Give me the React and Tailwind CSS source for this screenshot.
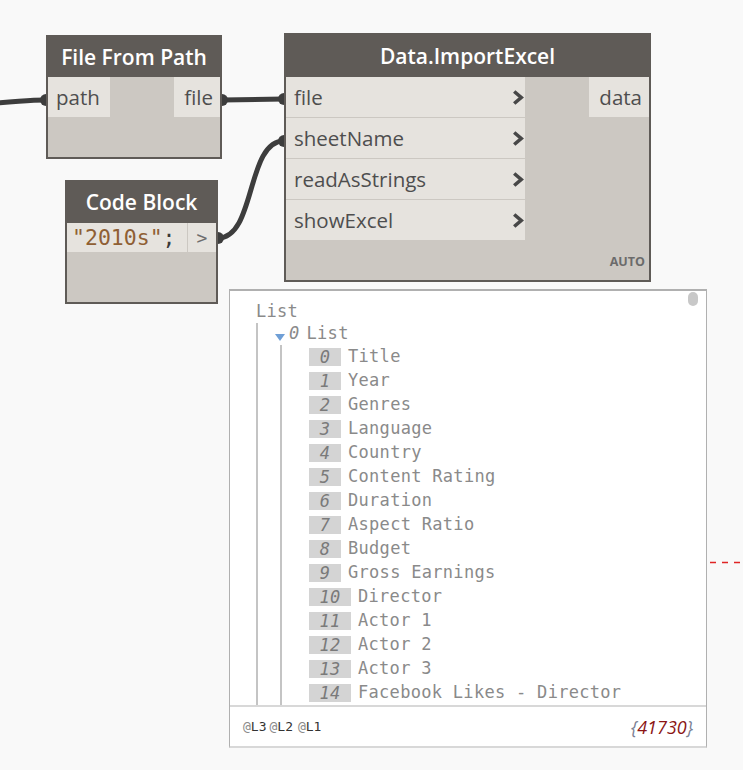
import React from "react";

const items = [
  "Title",
  "Year",
  "Genres",
  "Language",
  "Country",
  "Content Rating",
  "Duration",
  "Aspect Ratio",
  "Budget",
  "Gross Earnings",
  "Director",
  "Actor 1",
  "Actor 2",
  "Actor 3",
  "Facebook Likes - Director",
];

const sans = { fontFamily: '"Open Sans", "Noto Sans", sans-serif' };
const mono = { fontFamily: '"DejaVu Sans Mono", "Liberation Mono", monospace' };

function Chevron() {
  return (
    <svg width="12" height="15" viewBox="0 0 12 15">
      <path d="M2.2 1.5 L9.2 7.5 L2.2 13.5" fill="none" stroke="#474747" strokeWidth="3.6" />
    </svg>
  );
}

function Header({ children }) {
  return (
    <div className="h-[40px] bg-[#5f5b57] flex items-center justify-center text-white text-[21px] font-semibold leading-none">
      {children}
    </div>
  );
}

export default function App() {
  return (
    <div
      className="relative w-[743px] h-[770px] bg-[#f9f9f9] overflow-hidden text-[#4e4e4e]"
      style={sans}
    >
      {/* wires */}
      <svg className="absolute inset-0 pointer-events-none" width="743" height="770">
        <g fill="none" stroke="#3d3d3d" strokeWidth="5" strokeLinecap="round">
          <path d="M-10 103 C 15 102.5, 25 100, 46 100" />
          <path d="M222 100 L 284 99" />
          <path d="M218 238 C 256 238, 246 141, 284 141" />
        </g>
        <g fill="#3d3d3d">
          <circle cx="46" cy="100" r="6" />
          <circle cx="222" cy="100" r="6" />
          <circle cx="284" cy="99" r="6" />
          <circle cx="284" cy="141" r="6" />
          <circle cx="218" cy="238" r="6" />
        </g>
        <line
          x1="710"
          y1="562.5"
          x2="743"
          y2="562.5"
          stroke="#e02424"
          strokeWidth="1.5"
          strokeDasharray="6 6"
        />
      </svg>

      {/* File From Path */}
      <div className="absolute left-[46px] top-[35px] w-[176px] h-[124px] border-2 border-[#5f5b57] bg-[#ccc8c2] flex flex-col">
        <Header>File From Path</Header>
        <div className="flex justify-between text-[20.5px]">
          <div className="h-[40px] w-[62px] bg-[#e6e3de] pl-[8px] flex items-center">path</div>
          <div className="h-[40px] w-[46px] bg-[#e6e3de] pr-[7px] flex items-center justify-end">file</div>
        </div>
      </div>

      {/* Data.ImportExcel */}
      <div className="absolute left-[284px] top-[33px] w-[367px] h-[249px] border-2 border-[#5f5b57] bg-[#ccc8c2] flex flex-col">
        <div className="h-[42px] bg-[#5f5b57] flex items-center justify-center text-white text-[21px] font-semibold leading-none">
          Data.ImportExcel
        </div>
        <div className="flex justify-between text-[20.5px]">
          <div className="w-[239px] flex flex-col gap-[1px]">
            {["file", "sheetName", "readAsStrings", "showExcel"].map((p) => (
              <div
                key={p}
                className="h-[40px] bg-[#e6e3de] pl-[8px] pr-[1px] flex items-center justify-between"
              >
                <span>{p}</span>
                <Chevron />
              </div>
            ))}
          </div>
          <div className="h-[40px] w-[60px] bg-[#e6e3de] pr-[7px] flex items-center justify-end">
            data
          </div>
        </div>
        <div className="mt-auto flex justify-end pr-[4px] pb-[12px] text-[12.5px] font-bold leading-none text-[#6b6b6b]">
          AUTO
        </div>
      </div>

      {/* Code Block */}
      <div className="absolute left-[65px] top-[180px] w-[153px] h-[124px] border-2 border-[#5f5b57] bg-[#ccc8c2] flex flex-col">
        <div className="h-[41px] bg-[#5f5b57] flex items-center justify-center text-white text-[21px] font-semibold leading-none">
          Code Block
        </div>
        <div className="flex gap-[1px] h-[29px]" style={mono}>
          <div className="w-[120px] bg-[#e6e3de] pl-[5px] flex items-center text-[21.5px] leading-none">
            <span className="text-[#8f5f34]">"2010s"</span>
            <span className="text-[#3a3a3a]">;</span>
          </div>
          <div className="flex-1 bg-[#e6e3de] flex items-center justify-center text-[18px] text-[#6e6e6e] leading-none">
            &gt;
          </div>
        </div>
      </div>

      {/* Watch preview */}
      <div className="absolute left-[229px] top-[289px] w-[478px] h-[459px] bg-white border border-[#b0b0b0] border-t-2 border-b-2 border-b-[#d8d8d8] flex flex-col">
        <div className="relative flex-1 overflow-hidden" style={mono}>
          <div className="absolute right-[8px] top-[1px] w-[10px] h-[14px] rounded-full bg-[#c8c8c8]" />
          <div className="pl-[26px] pt-[10px] text-[17px] tracking-[0.3px] text-[#8a8a8a]">
            <div className="h-[22px] flex items-center">List</div>
            <div className="border-l-2 border-[#c4c4c4] pl-[22px]">
              <div className="h-[22px] flex items-center -ml-[5px]">
                <svg width="10" height="7" viewBox="0 0 10 7" className="mt-[6px] mr-[4px]">
                  <path d="M0 0 L10 0 L5 7 Z" fill="#6f9fd6" />
                </svg>
                <span className="italic mr-[7px]">0</span>
                <span>List</span>
              </div>
              <div className="border-l-2 border-[#c4c4c4] pl-[27px]">
                {items.map((it, i) => (
                  <div key={i} className="h-[24px] flex items-center gap-[7px] whitespace-nowrap">
                    <span
                      className={
                        (i < 10 ? "w-[32px]" : "w-[42px]") +
                        " h-[18px] bg-[#d4d4d4] italic text-[#7a7a7a] flex items-center justify-center leading-none"
                      }
                    >
                      {i}
                    </span>
                    <span>{it}</span>
                  </div>
                ))}
              </div>
            </div>
          </div>
        </div>
        <div className="h-[41px] border-t-2 border-[#d8d8d8] flex items-center justify-between px-[13px]">
          <div className="flex text-[13px] leading-none" style={mono}>
            <span><span className="text-[#8a8a8a]">@</span><span className="text-[#333]">L3</span></span>
            <span className="ml-[3px]"><span className="text-[#8a8a8a]">@</span><span className="text-[#333]">L2</span></span>
            <span className="ml-[5px]"><span className="text-[#8a8a8a]">@</span><span className="text-[#333]">L1</span></span>
          </div>
          <div className="italic text-[18px] leading-none">
            <span className="text-[#7a8194]">{"{"}</span>
            <span className="text-[#8b1414]">41730</span>
            <span className="text-[#7a8194]">{"}"}</span>
          </div>
        </div>
      </div>
    </div>
  );
}
